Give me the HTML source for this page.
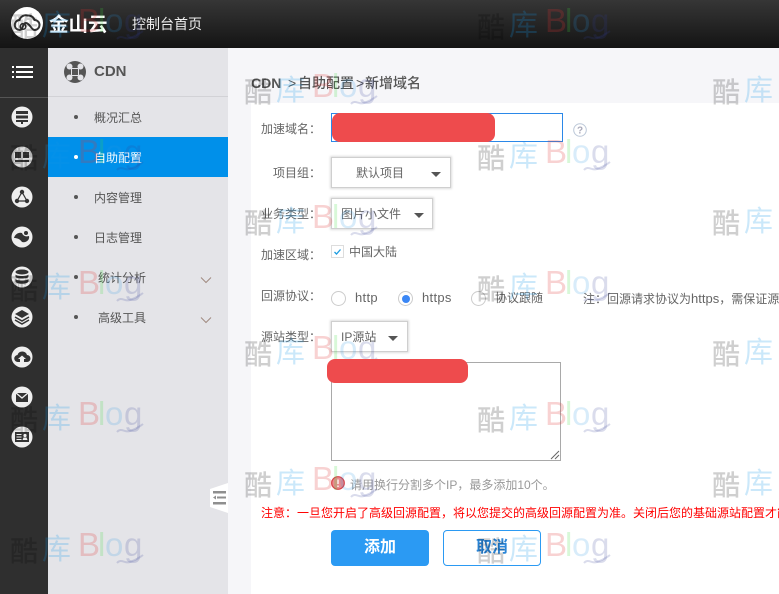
<!DOCTYPE html>
<html lang="zh"><head><meta charset="utf-8"><title>CDN</title>
<style>
*{box-sizing:border-box}
html,body{margin:0;padding:0}
body{width:779px;height:594px;overflow:hidden;position:relative;background:#f6f6f9;font:12px/16px "Liberation Sans","Noto Sans CJK SC",sans-serif;color:#666}
.a{position:absolute;white-space:nowrap}
.c{font-family:"Noto Sans CJK TC",sans-serif}
#hd{left:0;top:0;width:779px;height:48px;background:linear-gradient(#363636,#141414)}
#rail{left:0;top:48px;width:48px;height:546px;background:#2f2f2f}
#side{left:48px;top:48px;width:180px;height:546px;background:#e4e4e8}
#panel{left:251px;top:103px;width:528px;height:491px;background:#fff}
.ic{position:absolute;left:11px;width:22px;height:22px}
.m{left:94px;color:#555;line-height:16px}
.b{left:74px;width:4px;height:4px;border-radius:50%;background:#555}
.l{width:60px;text-align:right;left:261px;color:#666;line-height:16px}
.sel{background:#fff;border:1px solid #cfcfcf;box-shadow:0 0 2px 1px #ddd;height:31px;line-height:30px;color:#666}
.car{width:0;height:0;border:5px solid transparent;border-top:5px solid #555;border-bottom:0}
.ra{width:15px;height:15px;border:1px solid #ccc;border-radius:50%;background:#fff}
.w{position:absolute;width:140px;height:46px;z-index:5;pointer-events:none}
.w span{position:absolute;white-space:nowrap}
.w .k{left:-1px;top:-4px;font:500 28px/36px "Noto Sans CJK SC",sans-serif;color:rgba(0,0,0,.19)}
.w .u{left:31px;top:-7px;font:400 29px/36px "Noto Sans CJK SC",sans-serif;color:rgba(20,150,230,.22)}
.w .t{top:-10px;font:33px/38px "Liberation Sans",sans-serif}
.w .t1{left:67px;color:rgba(225,50,50,.22)}
.w .t2{left:87px;color:rgba(60,220,60,.2)}
.w .t3{left:94px;color:rgba(40,150,225,.18)}
.w .t4{left:113px;color:rgba(50,60,150,.18)}
.w svg{position:absolute;left:105px;top:18px}
.w path{fill:none;stroke:rgba(50,60,150,.18);stroke-width:2}
.red{background:#ee4b4d;z-index:6;border-radius:8px}
</style></head><body>
<div class="a" id="hd"></div>
<div class="a" id="rail"></div>
<div class="a" id="side"></div>
<div class="a" id="panel"></div>

<!-- header -->
<svg class="a" style="left:11px;top:7px" width="32" height="32" viewBox="0 0 32 32"><circle cx="16" cy="16" r="16" fill="#fff"/><path d="M9 23a5 5 0 0 1-.5-10 6.500 6.500 0 0 1 8-4.500 6.500 6.500 0 0 1 7 4.500 5 5 0 0 1 0 10c-3 0-5-7-8.500-7s-3 7-6 7z" fill="none" stroke="#333" stroke-width="2"/><circle cx="12" cy="19.500" r="2.800" fill="none" stroke="#333" stroke-width="1.600"/></svg>
<div class="a" style="left:49px;top:9px;font:700 19.500px/28px 'Noto Sans CJK SC',sans-serif;color:#fff">金山云</div>
<div class="a" style="left:132px;top:14px;font-size:14px;line-height:20px;color:#eee">控制台首页</div>

<!-- rail -->
<svg class="a" style="left:12px;top:65px" width="22" height="14" viewBox="0 0 22 14" fill="#fff"><rect x="0" y="1" width="2" height="2"/><rect x="4" y="1" width="17" height="2"/><rect x="0" y="6" width="2" height="2"/><rect x="4" y="6" width="17" height="2"/><rect x="0" y="11" width="2" height="2"/><rect x="4" y="11" width="17" height="2"/></svg>
<div class="a" style="left:0;top:97px;width:48px;height:1px;background:#555"></div>
<svg class="ic" style="top:106px" viewBox="0 0 22 22"><circle cx="11" cy="11" r="10.500" fill="#eee"/><path d="M5 5h12v3H5zM5 9.500h12v3H5zM5 14h12v2H12v2h-2v-2H5z" fill="#333"/></svg>
<svg class="ic" style="top:146px" viewBox="0 0 22 22"><circle cx="11" cy="11" r="10.500" fill="#ddd"/><path d="M4 6h6v6H4zM12 6h6v6h-6zM4 14h14v2H4z" fill="#333"/></svg>
<svg class="ic" style="top:186px" viewBox="0 0 22 22"><circle cx="11" cy="11" r="10.500" fill="#eee"/><path d="M11 6L6 15h10z" fill="none" stroke="#333" stroke-width="1.200"/><circle cx="11" cy="6" r="2.200" fill="#333"/><circle cx="6" cy="15" r="2.200" fill="#333"/><circle cx="16" cy="15" r="2.200" fill="#333"/></svg>
<svg class="ic" style="top:226px" viewBox="0 0 22 22"><circle cx="11" cy="11" r="10.500" fill="#eee"/><path d="M3 12c1-4 5-6 8-5 1 3 4 4 7 3 1 4-3 7-7 6-2-3-5-4-8-4z" fill="#333"/><circle cx="15" cy="7" r="2" fill="#333"/></svg>
<svg class="ic" style="top:266px" viewBox="0 0 22 22"><circle cx="11" cy="11" r="10.500" fill="#eee"/><ellipse cx="11" cy="6" rx="6.500" ry="2.500" fill="#333"/><path d="M4.500 8.500c1 2 12 2 13 0v2.500c-1 2-12 2-13 0zM4.500 13c1 2 12 2 13 0v2.500c-1 3-12 3-13 0z" fill="#333"/></svg>
<svg class="ic" style="top:306px" viewBox="0 0 22 22"><circle cx="11" cy="11" r="10.500" fill="#eee"/><path d="M11 4l7 4-7 4-7-4z" fill="#333"/><path d="M4 11l7 4 7-4M4 14l7 4 7-4" fill="none" stroke="#333" stroke-width="1.500"/></svg>
<svg class="ic" style="top:346px" viewBox="0 0 22 22"><circle cx="11" cy="11" r="10.500" fill="#eee"/><path d="M7 16a3.500 3.500 0 0 1-.5-7 5 5 0 0 1 9.500 0 3.500 3.500 0 0 1 0 7h-3v-3h2l-4-3.500L7 13h2v3z" fill="#333"/></svg>
<svg class="ic" style="top:386px" viewBox="0 0 22 22"><circle cx="11" cy="11" r="10.500" fill="#eee"/><path d="M5 7h12v9H5z" fill="#333"/><path d="M5 7l6 5 6-5" fill="none" stroke="#eee" stroke-width="1.300"/></svg>
<svg class="ic" style="top:426px" viewBox="0 0 22 22"><circle cx="11" cy="11" r="10.500" fill="#eee"/><path d="M4 6h14v10H4z" fill="#333"/><path d="M5.500 8.500h5M5.500 11h5M5.500 13.500h5" stroke="#eee" stroke-width="1"/><circle cx="14" cy="9.500" r="1.600" fill="#eee"/><path d="M11.500 14l1-2.500h3l1 2.500z" fill="#eee"/></svg>

<!-- side -->
<svg class="a" style="left:64px;top:61px" width="22" height="22" viewBox="0 0 22 22"><circle cx="11" cy="11" r="11" fill="#555"/><path d="M7 7h8v8H7z" fill="#e4e4e8"/><circle cx="5.500" cy="5.500" r="3" fill="#e4e4e8"/><circle cx="16.500" cy="5.500" r="3" fill="#e4e4e8"/><circle cx="5.500" cy="16.500" r="3" fill="#e4e4e8"/><circle cx="16.500" cy="16.500" r="3" fill="#e4e4e8"/><path d="M8 8h6v6H8z" fill="#555"/></svg>
<div class="a" style="left:94px;top:62px;font-size:15px;line-height:20px;font-weight:700;color:#555">CDN</div>
<div class="a" style="left:48px;top:96px;width:180px;height:1px;background:#d2d2d6"></div>
<div class="a" style="left:48px;top:137px;width:180px;height:40px;background:#0090ea"></div>
<div class="a b" style="top:115px"></div><div class="a m" style="top:110px">概况汇总</div>
<div class="a b" style="top:155px;background:#fff"></div><div class="a m" style="top:150px;color:#fff">自助配置</div>
<div class="a b" style="top:195px"></div><div class="a m" style="top:190px">内容管理</div>
<div class="a b" style="top:235px"></div><div class="a m" style="top:230px">日志管理</div>
<div class="a b" style="top:275px"></div><div class="a m" style="top:270px;left:98px">统计分析</div>
<div class="a b" style="top:315px"></div><div class="a m" style="top:310px;left:98px">高级工具</div>
<svg class="a" style="left:200px;top:276px" width="12" height="8" viewBox="0 0 12 8"><path d="M1 1.500l5 5 5-5" fill="none" stroke="#a08a80" stroke-width="1"/></svg>
<svg class="a" style="left:200px;top:316px" width="12" height="8" viewBox="0 0 12 8"><path d="M1 1.500l5 5 5-5" fill="none" stroke="#a08a80" stroke-width="1"/></svg>
<svg class="a" style="left:210px;top:483px" width="18" height="30" viewBox="0 0 18 30"><path d="M0 6L18 0v30L0 24z" fill="#fff"/><path d="M3 8h13v2.500H3zM3 19h13v2.500H3zM7 13.500h9v2H7z" fill="#8f8f8f"/><path d="M6 12.500v4l-3-2z" fill="#8f8f8f"/></svg>

<!-- main -->
<div class="a" style="left:251px;top:73px;font-size:14px;line-height:20px;font-weight:700;color:#555">CDN</div>
<div class="a" style="left:288px;top:73px;font-size:14px;line-height:20px;font-weight:500;color:#555">&gt;</div>
<div class="a" style="left:298px;top:73px;font-size:14px;line-height:20px;font-weight:500;color:#555">自助配置</div>
<div class="a" style="left:356px;top:73px;font-size:14px;line-height:20px;font-weight:500;color:#555">&gt;</div>
<div class="a" style="left:365px;top:73px;font-size:14px;line-height:20px;font-weight:500;color:#555">新增域名</div>

<div class="a l" style="top:121px">加速域名<span class="c">：</span></div>
<div class="a l" style="top:165px">项目组<span class="c">：</span></div>
<div class="a l" style="top:206px">业务类型<span class="c">：</span></div>
<div class="a l" style="top:247px">加速区域<span class="c">：</span></div>
<div class="a l" style="top:288px">回源协议<span class="c">：</span></div>
<div class="a l" style="top:329px">源站类型<span class="c">：</span></div>

<div class="a" style="left:331px;top:113px;width:232px;height:29px;border:1px solid #2b88e8;background:#fff"></div>
<div class="a red" style="left:332px;top:113px;width:163px;height:29px"></div>
<svg class="a" style="left:573px;top:123px" width="14" height="14" viewBox="0 0 14 14"><circle cx="7" cy="7" r="6.300" fill="none" stroke="#bcc8d8"/><text x="7" y="10.500" text-anchor="middle" font-size="10" font-weight="700" font-family="Liberation Sans" fill="#aab">?</text></svg>

<div class="a sel" style="left:331px;top:157px;width:120px;padding-left:24px">默认项目</div>
<div class="a car" style="left:431px;top:172px"></div>
<div class="a sel" style="left:331px;top:198px;width:102px;padding-left:9px">图片小文件</div>
<div class="a car" style="left:414px;top:213px"></div>

<div class="a" style="left:331px;top:245px;width:13px;height:13px;border:1px solid #ddd;background:#fff"></div>
<svg class="a" style="left:333px;top:248px" width="9" height="8" viewBox="0 0 9 8"><path d="M1.500 4l2 2 4-4.500" fill="none" stroke="#1c9ce0" stroke-width="1.300"/></svg>
<div class="a" style="left:349px;top:244px;color:#666">中国大陆</div>

<div class="a ra" style="left:331px;top:291px"></div>
<div class="a" style="left:355px;top:290px;font-size:13px;letter-spacing:.3px">http</div>
<div class="a ra" style="left:398px;top:291px"></div>
<div class="a" style="left:402px;top:295px;width:8px;height:8px;border-radius:50%;background:#3b87f5;z-index:1"></div>
<div class="a" style="left:422px;top:290px;font-size:13px;letter-spacing:.3px">https</div>
<div class="a ra" style="left:471px;top:291px"></div>
<div class="a" style="left:495px;top:290px">协议跟随</div>
<div class="a" style="left:583px;top:291px">注<span class="c">：</span>回源请求协议为<span style="font-size:13px">https</span>，需保证源站支持</div>

<div class="a sel" style="left:331px;top:321px;width:77px;padding-left:9px">IP源站</div>
<div class="a car" style="left:388px;top:336px"></div>

<div class="a" style="left:331px;top:362px;width:230px;height:99px;border:1px solid #a9a9a9;background:#fff"></div>
<svg class="a" style="left:550px;top:450px" width="10" height="10" viewBox="0 0 10 10"><path d="M1 9l8-8M5 9l4-4" stroke="#666" stroke-width="1"/></svg>
<div class="a red" style="left:327px;top:359px;width:141px;height:24px"></div>

<svg class="a" style="left:331px;top:476px" width="14" height="14" viewBox="0 0 14 14"><circle cx="7" cy="7" r="6.300" fill="#e98b8e" stroke="#d9434a" stroke-width="1.200"/><path d="M7 3.500v4.500M7 9.500v1.500" stroke="#fff" stroke-width="1.300"/></svg>
<div class="a" style="left:350px;top:477px;color:#999">请用换行分割多个IP，最多添加10个。</div>
<div class="a" style="left:261px;top:505px;color:#f00">注意<span class="c">：</span>一旦您开启了高级回源配置，将以您提交的高级回源配置为准。关闭后您的基础源站配置才能生效</div>

<div class="a" style="left:331px;top:530px;width:98px;height:36px;border-radius:4px;background:#2b9af3;color:#fff;font-size:16px;line-height:36px;text-align:center;font-weight:700">添加</div>
<div class="a" style="left:443px;top:530px;width:98px;height:36px;border-radius:4px;border:1px solid #2b9af3;background:#fff;color:#2b86d8;font-size:16px;line-height:34px;text-align:center;font-weight:700">取消</div>

<!-- watermarks -->
<div class="w" style="left:11px;top:12px"><span class="k">酷</span><span class="u">库</span><span class="t t1">B</span><span class="t t2">l</span><span class="t t3">o</span><span class="t t4">g</span><svg width="30" height="12" viewBox="0 0 30 12"><path d="M1 9c4-5 8 1 13-1s8-3 13-7"/></svg></div>
<div class="w" style="left:11px;top:143px"><span class="k">酷</span><span class="u">库</span><span class="t t1">B</span><span class="t t2">l</span><span class="t t3">o</span><span class="t t4">g</span><svg width="30" height="12" viewBox="0 0 30 12"><path d="M1 9c4-5 8 1 13-1s8-3 13-7"/></svg></div>
<div class="w" style="left:11px;top:274px"><span class="k">酷</span><span class="u">库</span><span class="t t1">B</span><span class="t t2">l</span><span class="t t3">o</span><span class="t t4">g</span><svg width="30" height="12" viewBox="0 0 30 12"><path d="M1 9c4-5 8 1 13-1s8-3 13-7"/></svg></div>
<div class="w" style="left:11px;top:405px"><span class="k">酷</span><span class="u">库</span><span class="t t1">B</span><span class="t t2">l</span><span class="t t3">o</span><span class="t t4">g</span><svg width="30" height="12" viewBox="0 0 30 12"><path d="M1 9c4-5 8 1 13-1s8-3 13-7"/></svg></div>
<div class="w" style="left:11px;top:536px"><span class="k">酷</span><span class="u">库</span><span class="t t1">B</span><span class="t t2">l</span><span class="t t3">o</span><span class="t t4">g</span><svg width="30" height="12" viewBox="0 0 30 12"><path d="M1 9c4-5 8 1 13-1s8-3 13-7"/></svg></div>
<div class="w" style="left:478px;top:12px"><span class="k">酷</span><span class="u">库</span><span class="t t1">B</span><span class="t t2">l</span><span class="t t3">o</span><span class="t t4">g</span><svg width="30" height="12" viewBox="0 0 30 12"><path d="M1 9c4-5 8 1 13-1s8-3 13-7"/></svg></div>
<div class="w" style="left:478px;top:143px"><span class="k">酷</span><span class="u">库</span><span class="t t1">B</span><span class="t t2">l</span><span class="t t3">o</span><span class="t t4">g</span><svg width="30" height="12" viewBox="0 0 30 12"><path d="M1 9c4-5 8 1 13-1s8-3 13-7"/></svg></div>
<div class="w" style="left:478px;top:274px"><span class="k">酷</span><span class="u">库</span><span class="t t1">B</span><span class="t t2">l</span><span class="t t3">o</span><span class="t t4">g</span><svg width="30" height="12" viewBox="0 0 30 12"><path d="M1 9c4-5 8 1 13-1s8-3 13-7"/></svg></div>
<div class="w" style="left:478px;top:405px"><span class="k">酷</span><span class="u">库</span><span class="t t1">B</span><span class="t t2">l</span><span class="t t3">o</span><span class="t t4">g</span><svg width="30" height="12" viewBox="0 0 30 12"><path d="M1 9c4-5 8 1 13-1s8-3 13-7"/></svg></div>
<div class="w" style="left:478px;top:536px"><span class="k">酷</span><span class="u">库</span><span class="t t1">B</span><span class="t t2">l</span><span class="t t3">o</span><span class="t t4">g</span><svg width="30" height="12" viewBox="0 0 30 12"><path d="M1 9c4-5 8 1 13-1s8-3 13-7"/></svg></div>
<div class="w" style="left:245px;top:77px"><span class="k">酷</span><span class="u">库</span><span class="t t1">B</span><span class="t t2">l</span><span class="t t3">o</span><span class="t t4">g</span><svg width="30" height="12" viewBox="0 0 30 12"><path d="M1 9c4-5 8 1 13-1s8-3 13-7"/></svg></div>
<div class="w" style="left:245px;top:208px"><span class="k">酷</span><span class="u">库</span><span class="t t1">B</span><span class="t t2">l</span><span class="t t3">o</span><span class="t t4">g</span><svg width="30" height="12" viewBox="0 0 30 12"><path d="M1 9c4-5 8 1 13-1s8-3 13-7"/></svg></div>
<div class="w" style="left:245px;top:339px"><span class="k">酷</span><span class="u">库</span><span class="t t1">B</span><span class="t t2">l</span><span class="t t3">o</span><span class="t t4">g</span><svg width="30" height="12" viewBox="0 0 30 12"><path d="M1 9c4-5 8 1 13-1s8-3 13-7"/></svg></div>
<div class="w" style="left:245px;top:470px"><span class="k">酷</span><span class="u">库</span><span class="t t1">B</span><span class="t t2">l</span><span class="t t3">o</span><span class="t t4">g</span><svg width="30" height="12" viewBox="0 0 30 12"><path d="M1 9c4-5 8 1 13-1s8-3 13-7"/></svg></div>
<div class="w" style="left:713px;top:77px"><span class="k">酷</span><span class="u">库</span></div>
<div class="w" style="left:713px;top:208px"><span class="k">酷</span><span class="u">库</span></div>
<div class="w" style="left:713px;top:339px"><span class="k">酷</span><span class="u">库</span></div>
<div class="w" style="left:713px;top:470px"><span class="k">酷</span><span class="u">库</span></div>
</body></html>
